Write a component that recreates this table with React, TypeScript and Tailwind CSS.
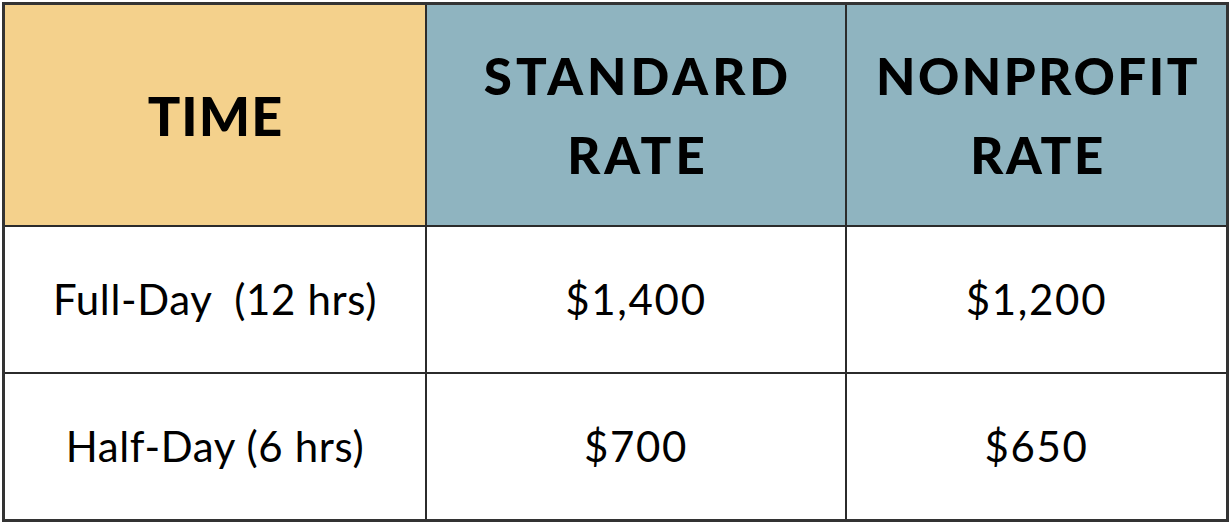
const rows = [
  { time: 'Full-Day  (12 hrs)', standard: '$1,400', nonprofit: '$1,200' },
  { time: 'Half-Day (6 hrs)', standard: '$700', nonprofit: '$650' },
];

export default function App() {
  return (
    <div className="w-[1231px] h-[523px] bg-white p-[2px]" style={{ fontFamily: 'Lato, "Noto Sans", sans-serif' }}>
      <div className="grid grid-cols-[420px_418px_379px] grid-rows-[220px_145px_145px] gap-[2px] bg-[#2b2b2b] border-[3px] border-[#333333] w-[1227px] h-[520px] text-black">
        <div className="bg-[#f4d18c] flex items-center justify-center">
          <span className="text-[54px] font-black tracking-[0.02em] pl-[1px]">TIME</span>
        </div>
        <div className="bg-[#8fb4c0] flex items-center justify-center text-center">
          <span className="text-[51px] font-black leading-[79px] tracking-[0.08em] pl-[4px]">
            STANDARD
            <br />
            RATE
          </span>
        </div>
        <div className="bg-[#8fb4c0] flex items-center justify-center text-center">
          <span className="text-[51px] font-black leading-[79px] tracking-[0.05em] pl-[3px]">
            NONPROFIT
            <br />
            RATE
          </span>
        </div>
        {rows.map((r) => (
          <>
            <div key={r.time} className="bg-white flex items-center justify-center">
              <span className="text-[42px] tracking-[0.015em] whitespace-pre">{r.time}</span>
            </div>
            <div className="bg-white flex items-center justify-center">
              <span className="text-[42px] tracking-[0.04em]">{r.standard}</span>
            </div>
            <div className="bg-white flex items-center justify-center">
              <span className="text-[42px] tracking-[0.04em]">{r.nonprofit}</span>
            </div>
          </>
        ))}
      </div>
    </div>
  );
}
